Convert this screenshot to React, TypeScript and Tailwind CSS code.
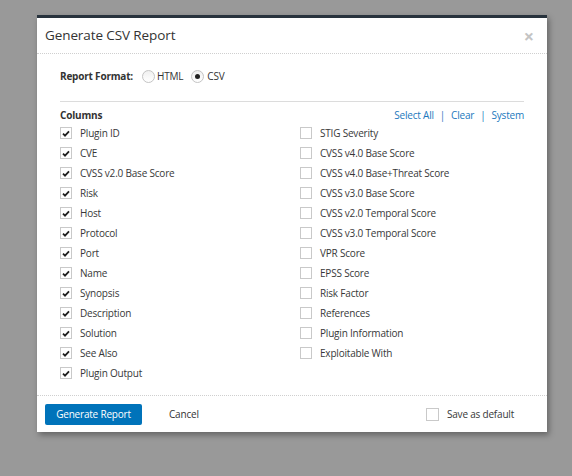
import React from "react";

const left = [
  "Plugin ID",
  "CVE",
  "CVSS v2.0 Base Score",
  "Risk",
  "Host",
  "Protocol",
  "Port",
  "Name",
  "Synopsis",
  "Description",
  "Solution",
  "See Also",
  "Plugin Output",
];
const right = [
  "STIG Severity",
  "CVSS v4.0 Base Score",
  "CVSS v4.0 Base+Threat Score",
  "CVSS v3.0 Base Score",
  "CVSS v2.0 Temporal Score",
  "CVSS v3.0 Temporal Score",
  "VPR Score",
  "EPSS Score",
  "Risk Factor",
  "References",
  "Plugin Information",
  "Exploitable With",
];

function Box({ checked }: { checked?: boolean }) {
  return (
    <span className="flex h-[12px] w-[12px] shrink-0 items-center justify-center border border-[#c9c9c9] bg-white">
      {checked && (
        <svg width="8" height="7" viewBox="0 0 8 7">
          <path d="M1 3.6 L3 5.6 L7 1.4" fill="none" stroke="#1f1f1f" strokeWidth="1.8" />
        </svg>
      )}
    </span>
  );
}

function Row({ label, checked }: { label: string; checked?: boolean }) {
  return (
    <div className="flex h-[20px] items-center">
      <Box checked={checked} />
      <span className="ml-[8px] text-[10px] tracking-[-0.2px] text-[#383838]">{label}</span>
    </div>
  );
}

function Radio({ checked }: { checked?: boolean }) {
  return (
    <span className="flex h-[13px] w-[13px] items-center justify-center rounded-full border border-[#c4c4c4] bg-gradient-to-b from-[#f0f0f0] to-[#ffffff]">
      {checked && <span className="h-[5px] w-[5px] rounded-full bg-[#222]" />}
    </span>
  );
}

export default function App() {
  return (
    <div
      className="h-[476px] w-[572px] bg-[#999999] pl-[37px] pt-[15px]"
      style={{ fontFamily: "'Open Sans', 'Liberation Sans', sans-serif" }}
    >
      <div className="w-[510px] border-t-[3px] border-[#28333d] bg-white shadow-[2px_3px_6px_rgba(0,0,0,0.35)]">
        <div className="flex h-[36px] items-center justify-between border-b border-dotted border-[#cfcfcf] pl-[8px] pr-[13px]">
          <span className="text-[13.5px] tracking-[-0.1px] text-[#333]">Generate CSV Report</span>
          <span className="text-[18px] font-bold leading-none text-[#c4c4c4]">×</span>
        </div>
        <div className="px-[23px]">
          <div className="mt-[14px] flex h-[16px] items-center text-[10px] tracking-[-0.2px] text-[#333]">
            <span className="font-bold">Report Format:</span>
            <span className="ml-[9px]"><Radio /></span>
            <span className="ml-[2px]">HTML</span>
            <span className="ml-[8px]"><Radio checked /></span>
            <span className="ml-[3px]">CSV</span>
          </div>
          <div className="mt-[17px] border-t border-[#dcdcdc]" />
          <div className="mt-[6px] flex h-[14px] items-center justify-between text-[10px] tracking-[-0.2px]">
            <span className="font-bold text-[#333]">Columns</span>
            <span className="text-[#1b78bd]">
              Select All<span className="mx-[6px]">|</span>Clear<span className="mx-[6px]">|</span>System
            </span>
          </div>
          <div className="mt-[1px] flex pb-[12px]">
            <div className="w-[240px]">
              {left.map((l) => (
                <Row key={l} label={l} checked />
              ))}
            </div>
            <div>
              {right.map((l) => (
                <Row key={l} label={l} />
              ))}
            </div>
          </div>
        </div>
        <div className="flex h-[37px] items-center border-t border-dotted border-[#cfcfcf] pl-[8px] pr-[33px]">
          <button className="h-[21px] w-[97px] rounded-[2px] bg-[#0073ba] text-[10px] tracking-[-0.2px] text-white">
            Generate Report
          </button>
          <span className="ml-[27px] text-[10px] tracking-[-0.2px] text-[#333]">Cancel</span>
          <div className="ml-auto flex items-center">
            <span className="flex h-[13px] w-[13px] border border-[#c9c9c9] bg-white" />
            <span className="ml-[8px] text-[10px] tracking-[-0.2px] text-[#383838]">Save as default</span>
          </div>
        </div>
      </div>
    </div>
  );
}
